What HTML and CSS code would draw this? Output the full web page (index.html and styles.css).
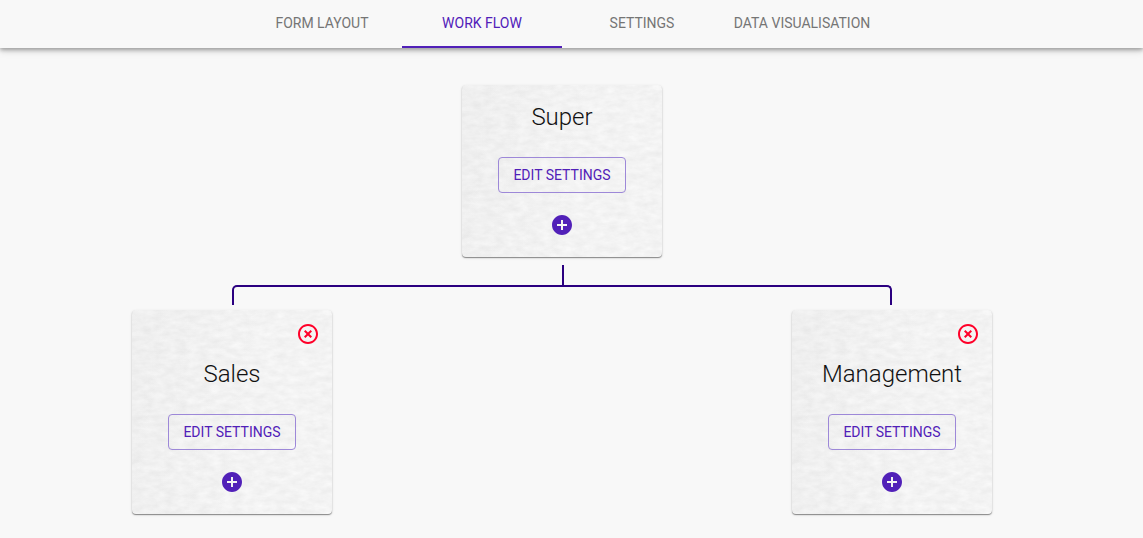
FILE: index.html
```html
<!DOCTYPE html>
<html lang="en">
<head>
<meta charset="utf-8">
<meta name="viewport" content="width=device-width, initial-scale=1">
<title>Work Flow</title>
<link rel="stylesheet" href="styles.css">
</head>
<body>
<header class="topbar">
  <nav class="tabs">
    <a class="tab" href="#form-layout">FORM LAYOUT</a>
    <a class="tab tab-active" href="#work-flow" aria-current="page">WORK FLOW</a>
    <a class="tab" href="#settings">SETTINGS</a>
    <a class="tab" href="#data">DATA VISUALISATION</a>
  </nav>
</header>
<main class="content">
  <div class="tree">
    <section class="card card-root">
      <h2 class="card-title">Super</h2>
      <button class="edit" type="button">EDIT SETTINGS</button>
      <button class="icon-button add" type="button" aria-label="Add below Super">
        <svg viewBox="0 0 24 24" class="icon"><path d="M12 2C6.48 2 2 6.48 2 12s4.480 10 10 10 10-4.480 10-10S17.520 2 12 2zm5 11h-4v4h-2v-4H7v-2h4V7h2v4h4v2z"/></svg>
      </button>
    </section>
    <div class="stem"></div>
    <div class="branch"></div>
    <div class="children">
      <section class="card">
        <button class="icon-button remove" type="button" aria-label="Remove Sales">
          <svg viewBox="0 0 24 24" class="icon"><path d="M14.590 8L12 10.590 9.410 8 8 9.410 10.590 12 8 14.590 9.410 16 12 13.410 14.590 16 16 14.590 13.410 12 16 9.410 14.590 8zM12 2C6.470 2 2 6.470 2 12s4.470 10 10 10 10-4.470 10-10S17.530 2 12 2zm0 18c-4.410 0-8-3.590-8-8s3.590-8 8-8 8 3.590 8 8-3.590 8-8 8z"/></svg>
        </button>
        <h2 class="card-title">Sales</h2>
        <button class="edit" type="button">EDIT SETTINGS</button>
        <button class="icon-button add" type="button" aria-label="Add below Sales">
          <svg viewBox="0 0 24 24" class="icon"><path d="M12 2C6.480 2 2 6.480 2 12s4.480 10 10 10 10-4.480 10-10S17.520 2 12 2zm5 11h-4v4h-2v-4H7v-2h4V7h2v4h4v2z"/></svg>
        </button>
      </section>
      <section class="card">
        <button class="icon-button remove" type="button" aria-label="Remove Management">
          <svg viewBox="0 0 24 24" class="icon"><path d="M14.590 8L12 10.590 9.410 8 8 9.410 10.590 12 8 14.590 9.410 16 12 13.410 14.590 16 16 14.590 13.410 12 16 9.410 14.590 8zM12 2C6.470 2 2 6.470 2 12s4.470 10 10 10 10-4.470 10-10S17.530 2 12 2zm0 18c-4.410 0-8-3.590-8-8s3.590-8 8-8 8 3.590 8 8-3.590 8-8 8z"/></svg>
        </button>
        <h2 class="card-title">Management</h2>
        <button class="edit" type="button">EDIT SETTINGS</button>
        <button class="icon-button add" type="button" aria-label="Add below Management">
          <svg viewBox="0 0 24 24" class="icon"><path d="M12 2C6.480 2 2 6.480 2 12s4.480 10 10 10 10-4.480 10-10S17.520 2 12 2zm5 11h-4v4h-2v-4H7v-2h4V7h2v4h4v2z"/></svg>
        </button>
      </section>
    </div>
  </div>
</main>
</body>
</html>
```
FILE: styles.css
```css
* { box-sizing: border-box; }

body {
  margin: 0;
  background: #f8f8f8;
  color: #111;
  font-family: Roboto, "Liberation Sans", sans-serif;
}

.topbar {
  padding-right: 19px;
  background: #f8f8f8;
  box-shadow: 0 2px 4px rgba(0, 0, 0, .3), 0 3px 8px rgba(0, 0, 0, .12);
}

.tabs {
  display: flex;
  justify-content: center;
}

.tab {
  display: flex;
  flex: 0 1 160px;
  align-items: center;
  justify-content: center;
  height: 48px;
  border-bottom: 2px solid transparent;
  color: #757575;
  font-size: 14px;
  font-weight: 400;
  text-decoration: none;
  white-space: nowrap;
}

.tab-active {
  border-bottom-color: #5120b8;
  color: #5120b8;
}

.content { padding: 37px 19px 24px 0; }

.tree {
  display: flex;
  flex-direction: column;
  max-width: 860px;
  margin: 0 auto;
}

.card {
  display: flex;
  flex-direction: column;
  align-items: center;
  width: 200px;
  padding: 12px 12px 20px;
  border-radius: 4px;
  background-color: #f1f1f1;
  background-image:
    linear-gradient(100deg, rgba(0, 0, 0, .02), transparent 60%),
    url("data:image/svg+xml,%3Csvg xmlns='http://www.w3.org/2000/svg' width='200' height='205'%3E%3Cfilter id='p' x='0' y='0' width='100%25' height='100%25' color-interpolation-filters='sRGB'%3E%3CfeTurbulence type='fractalNoise' baseFrequency='.09 .18' numOctaves='5' seed='8'/%3E%3CfeColorMatrix values='.065 0 0 0 .92 .065 0 0 0 .92 .065 0 0 0 .92 0 0 0 0 1'/%3E%3C/filter%3E%3Crect width='200' height='205' filter='url(%23p)'/%3E%3C/svg%3E");
  box-shadow: 0 1px 1px rgba(0, 0, 0, .4), 0 1px 3px rgba(0, 0, 0, .12);
}

.card-root { align-self: center; }

.card-title {
  margin: 0;
  font-size: 24px;
  font-weight: 300;
  line-height: 40px;
}

.edit {
  width: 128px;
  height: 36px;
  margin-top: 20px;
  padding: 0;
  border: 1px solid #9d88d8;
  border-radius: 4px;
  background: transparent;
  color: #5120b8;
  font: 400 14px Roboto, "Liberation Sans", sans-serif;
}

.icon-button {
  width: 24px;
  height: 24px;
  padding: 0;
  border: 0;
  background: transparent;
}

.icon {
  display: block;
  fill: currentColor;
}

.add {
  margin-top: 20px;
  color: #5120b8;
}

.remove {
  align-self: flex-end;
  margin-bottom: 8px;
  color: #ff0029;
}

.stem {
  height: 20px;
  margin: 8px 0 0 50%;
  border-left: 2px solid #2b0080;
}

.branch {
  height: 20px;
  margin: 0 100px;
  border: 2px solid #2b0080;
  border-bottom: 0;
  border-radius: 5px 5px 0 0;
}

.children {
  display: flex;
  justify-content: space-between;
  margin-top: 5px;
}
```
